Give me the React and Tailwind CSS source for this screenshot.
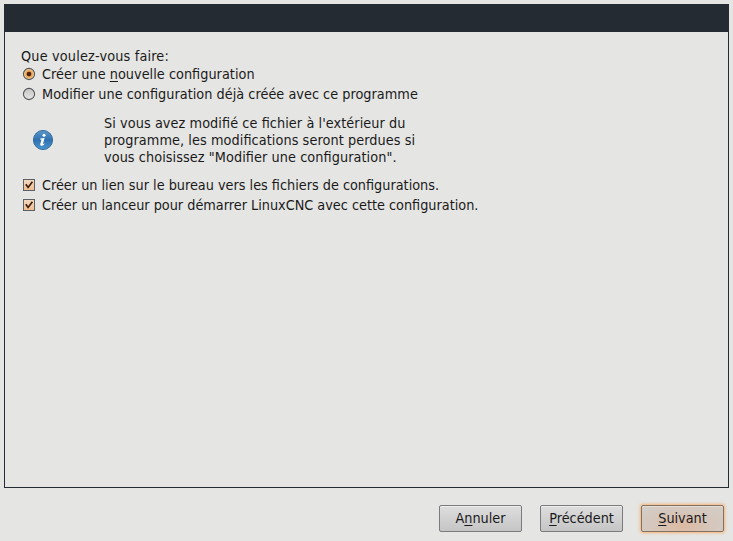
import React from "react";

function Radio({ checked }) {
  return (
    <svg className="size-[14px] shrink-0" viewBox="0 0 14 14">
      <defs>
        <linearGradient id="radioOff" x1="0" y1="0" x2="0" y2="1">
          <stop offset="0" stopColor="#c4c4c2" />
          <stop offset="1" stopColor="#e6e6e6" />
        </linearGradient>
        <radialGradient id="radioOn">
          <stop offset="0.3" stopColor="#e08a35" />
          <stop offset="1" stopColor="#f6d9a8" />
        </radialGradient>
      </defs>
      <circle cx="7" cy="7" r="5.6" fill={checked ? "url(#radioOn)" : "url(#radioOff)"} stroke="#54585c" strokeWidth="1.1" />
      {checked && <circle cx="7" cy="7" r="2.3" fill="#4f2410" />}
    </svg>
  );
}

function Check() {
  return (
    <svg className="size-[14px] shrink-0" viewBox="0 0 14 14">
      <defs>
        <linearGradient id="check" x1="0" y1="0" x2="0" y2="1">
          <stop offset="0" stopColor="#f0d9c2" />
          <stop offset="1" stopColor="#f1bd8e" />
        </linearGradient>
      </defs>
      <rect x="1.5" y="1.5" width="11" height="11" fill="url(#check)" stroke="#5b6065" />
      <path d="M3.8 6.2 L6.1 9.4 L10.4 3.8" fill="none" stroke="#3c1d10" strokeWidth="1.7" />
    </svg>
  );
}

function Option({ icon, children }) {
  return (
    <label className="flex h-5 items-center gap-[6px]">
      {icon}
      <span>{children}</span>
    </label>
  );
}

function InfoIcon() {
  return (
    <svg className="relative -top-px size-[22px] shrink-0" viewBox="0 0 22 22">
      <defs>
        <linearGradient id="info" x1="0" y1="0" x2="0" y2="1">
          <stop offset="0" stopColor="#5b97cb" />
          <stop offset="0.5" stopColor="#2f71b0" />
          <stop offset="1" stopColor="#4b96d0" />
        </linearGradient>
      </defs>
      <circle cx="11" cy="11" r="9.6" fill="url(#info)" stroke="#2c6598" strokeWidth="0.9" />
      <circle cx="12" cy="6.2" r="1.5" fill="#fff" />
      <path d="M8.2 9.5 L12.6 8.9 L11 14.6 Q11 15.7 13 14.3 Q11.4 17.1 9.1 16.8 Q7.9 16.4 8.3 14.9 L9.5 10.5 L8.1 10.4 Z" fill="#fff" />
    </svg>
  );
}

function Button({ primary, children }) {
  return (
    <button
      className={
        "flex h-[27px] w-[83px] items-center justify-center rounded-[2px] border pb-px " +
        (primary
          ? "border-[#85705e] bg-[radial-gradient(ellipse_at_50%_80%,#dcb9a2_0%,#d6c6bb_50%,#d2cfca_100%)] shadow-[0_0_3px_1px_#f4b47c,inset_0_1px_0_#e6ddd5]"
          : "border-[#7b7b7b] bg-linear-to-b from-[#dedede] to-[#c5c5c5] shadow-[inset_0_1px_0_#ededed]")
      }
    >
      <span>{children}</span>
    </button>
  );
}

function Key({ children }) {
  return <span className="underline decoration-1 underline-offset-2">{children}</span>;
}

export default function App() {
  return (
    <div className="flex h-[541px] w-[733px] flex-col bg-[#e5e5e3] px-1 pt-1 font-['DejaVu_Sans_Condensed','DejaVu_Sans',sans-serif] text-[14.3px] leading-[17px] whitespace-nowrap text-[#1a1a1a] [font-feature-settings:'liga'_1] [font-stretch:condensed]">
      <main className="h-[484px] w-[725px] border border-[#242b33]">
        <header className="h-[27px] bg-[#242b33]" />
        <div className="flex flex-col pt-[16px] pl-4">
          <p className="h-4 tracking-[0.18px]">Que voulez-vous faire:</p>
          <div className="pl-px tracking-[0.03px]">
            <Option icon={<Radio checked />}>
              Créer une <Key>n</Key>ouvelle configuration
            </Option>
            <Option icon={<Radio />}>Modifier une configuration déjà créée avec ce programme</Option>
          </div>
          <div className="mt-[11px] flex items-center gap-[50px] pl-[11px] tracking-[0.08px]">
            <InfoIcon />
            <p>
              Si vous avez modifié ce fichier à l'extérieur du
              <br />
              programme, les modifications seront perdues si
              <br />
              vous choisissez "Modifier une configuration".
            </p>
          </div>
          <div className="mt-[9px] pl-px">
            <Option icon={<Check />}>Créer un lien sur le bureau vers les fichiers de configurations.</Option>
            <Option icon={<Check />}>Créer un lanceur pour démarrer LinuxCNC avec cette configuration.</Option>
          </div>
        </div>
      </main>
      <footer className="mt-[17px] flex justify-end gap-[18px] pr-[5px]">
        <Button>
          A<Key>n</Key>nuler
        </Button>
        <Button>
          <Key>P</Key>récédent
        </Button>
        <Button primary>
          <Key>S</Key>uivant
        </Button>
      </footer>
    </div>
  );
}
